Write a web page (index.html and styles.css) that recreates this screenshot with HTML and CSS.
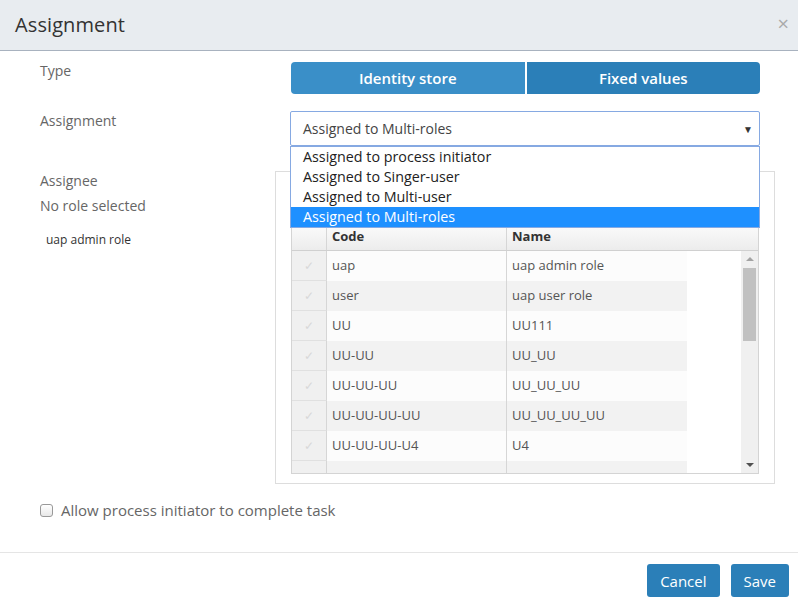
FILE: index.html
```html
<!DOCTYPE html>
<html>
<head>
<meta charset="utf-8">
<link rel="stylesheet" href="styles.css">
</head>
<body>
<div class="modal">
  <div class="modal-header">
    <h1 class="title">Assignment</h1>
    <span class="close">×</span>
  </div>
  <div class="modal-body">
    <div class="form-row row-type">
      <div class="label">Type</div>
      <div class="control">
        <div class="btn-group">
          <button class="seg seg-active">Identity store</button>
          <button class="seg">Fixed values</button>
        </div>
      </div>
    </div>
    <div class="form-row row-assign">
      <div class="label">Assignment</div>
      <div class="control select-wrap">
        <div class="select">
          <span>Assigned to Multi-roles</span>
          <span class="arrow">▼</span>
        </div>
        <ul class="options">
          <li>Assigned to process initiator</li>
          <li>Assigned to Singer-user</li>
          <li>Assigned to Multi-user</li>
          <li class="selected">Assigned to Multi-roles</li>
        </ul>
      </div>
    </div>
    <div class="form-row row-assignee">
      <div class="left">
        <div class="label">Assignee</div>
        <div class="label none">No role selected</div>
        <div class="chosen">uap admin role</div>
      </div>
      <div class="panel">
        <div class="grid">
          <div class="grid-head">
            <div class="c-chk"></div>
            <div class="c-code">Code</div>
            <div class="c-name">Name</div>
          </div>
          <div class="grid-body">
            <div class="rows">
              <div class="grow"><div class="c-chk">✓</div><div class="c-code">uap</div><div class="c-name">uap admin role</div></div>
              <div class="grow"><div class="c-chk">✓</div><div class="c-code">user</div><div class="c-name">uap user role</div></div>
              <div class="grow"><div class="c-chk">✓</div><div class="c-code">UU</div><div class="c-name">UU111</div></div>
              <div class="grow"><div class="c-chk">✓</div><div class="c-code">UU-UU</div><div class="c-name">UU_UU</div></div>
              <div class="grow"><div class="c-chk">✓</div><div class="c-code">UU-UU-UU</div><div class="c-name">UU_UU_UU</div></div>
              <div class="grow"><div class="c-chk">✓</div><div class="c-code">UU-UU-UU-UU</div><div class="c-name">UU_UU_UU_UU</div></div>
              <div class="grow"><div class="c-chk">✓</div><div class="c-code">UU-UU-UU-U4</div><div class="c-name">U4</div></div>
              <div class="grow"><div class="c-chk"></div><div class="c-code"></div><div class="c-name"></div></div>
            </div>
            <div class="scrollbar">
              <span class="sb-up"></span>
              <span class="sb-thumb"></span>
              <span class="sb-down"></span>
            </div>
          </div>
        </div>
      </div>
    </div>
    <label class="check-row">
      <span class="checkbox"></span>
      <span>Allow process initiator to complete task</span>
    </label>
  </div>
  <div class="modal-footer">
    <button class="btn">Cancel</button>
    <button class="btn">Save</button>
  </div>
</div>
</body>
</html>
```

FILE: styles.css
```css
* { box-sizing: border-box; }
html, body { margin: 0; padding: 0; background: #fff; }
body {
  font-family: "Open Sans", "Noto Sans", sans-serif;
  color: #666;
  width: 798px;
  height: 607px;
  overflow: hidden;
}
.modal { width: 798px; height: 607px; display: flex; flex-direction: column; }
.modal-header {
  height: 51px;
  background: #e8ecf0;
  border-bottom: 1px solid #a8b2bf;
  display: flex;
  align-items: center;
  justify-content: space-between;
  padding: 0 9px 2px 15px;
}
.title { margin: 0; font-size: 20px; font-weight: normal; color: #333; letter-spacing: 0.1px; }
.close { font-size: 20px; color: #aaa; line-height: 1; }
.modal-body { flex: 1; padding: 0 0 0 40px; position: relative; }
.form-row { display: flex; }
.label { width: 250px; font-size: 14px; line-height: 20px; color: #666; }
.row-type { margin-top: 10px; }
.control { width: 470px; }
.row-type .control { margin-top: 1px; }
.btn-group { display: flex; gap: 2px; padding-left: 1px; }
.seg {
  flex: 1;
  height: 32px;
  border: none;
  background: #2b7fb8;
  color: #fff;
  font-family: inherit;
  font-size: 15px;
  font-weight: 600;
  border-radius: 0 4px 4px 0;
}
.seg-active { background: #3a8fc8; border-radius: 4px 0 0 4px; }
.row-assign { margin-top: 17px; }
.row-assign .label { margin-top: 0; }
.select-wrap { position: relative; z-index: 5; }
.select {
  height: 35px;
  border: 1px solid #86a9e2;
  border-radius: 2px;
  display: flex;
  align-items: center;
  justify-content: space-between;
  padding: 0 6px 0 12px;
  font-size: 14px;
  color: #444;
}
.arrow { font-size: 10px; color: #333; }
.options {
  position: absolute;
  top: 35px;
  left: 0;
  width: 470px;
  margin: 0;
  padding: 0;
  list-style: none;
  background: #fff;
  border: 1px solid #86a9e2;
}
.options li { height: 20px; line-height: 20px; padding-left: 12px; font-size: 14.3px; color: #222; }
.options li.selected { background: #1e90ff; color: #fff; }
.row-assignee { margin-top: 25px; }
.left { width: 235px; }
.none { margin-top: 5px; }
.chosen { font-size: 12px; color: #333; margin: 15px 0 0 6px; }
.panel {
  width: 500px;
  height: 313px;
  border: 1px solid #ddd;
  padding: 54px 15px 0 15px;
}
.grid { border: 1px solid #d4d4d4; height: 248px; display: flex; flex-direction: column; }
.grid-head {
  height: 24px;
  flex: none;
  display: flex;
  background: linear-gradient(#fafafa, #ececec);
  border-bottom: 1px solid #d0d0d0;
  font-size: 13px;
  font-weight: bold;
  color: #333;
  line-height: 19px;
}
.c-chk { width: 35px; flex: none; border-right: 1px solid #d6d6d6; }
.c-code { width: 180px; flex: none; border-right: 1px solid #d6d6d6; padding-left: 5px; }
.c-name { width: 180px; flex: none; padding-left: 5px; }
.grid-body { flex: 1; display: flex; overflow: hidden; }
.rows { flex: 1; overflow: hidden; }
.grow { height: 30px; display: flex; font-size: 13px; line-height: 29px; color: #555; }
.grow:nth-child(odd) .c-code, .grow:nth-child(odd) .c-name { background: #fcfcfc; }
.grow:nth-child(even) .c-code, .grow:nth-child(even) .c-name { background: #f2f2f2; }
.grow .c-chk { background: #f0f0f0; border-bottom: 1px solid #e0e0e0; color: #d8d8d8; font-size: 12px; text-align: center; }
.scrollbar { width: 17px; background: #f0f0f0; display: flex; flex-direction: column; align-items: center; }
.sb-up { margin-top: 6px; width: 0; height: 0; border-left: 4px solid transparent; border-right: 4px solid transparent; border-bottom: 4px solid #a3a3a3; }
.sb-thumb { margin-top: 7px; width: 13px; height: 73px; background: #c1c1c1; }
.sb-down { margin-top: auto; margin-bottom: 6px; width: 0; height: 0; border-left: 4px solid transparent; border-right: 4px solid transparent; border-top: 4px solid #505050; }
.check-row { display: flex; align-items: center; gap: 8px; margin-top: 16px; font-size: 15px; color: #666; }
.checkbox { width: 13px; height: 13px; border: 1px solid #999; border-radius: 3px; background: linear-gradient(#fff, #e8e8e8); }
.modal-footer {
  height: 55px;
  border-top: 1px solid #e5e5e5;
  display: flex;
  justify-content: flex-end;
  align-items: flex-start;
  gap: 11px;
  padding: 11px 9px 0 0;
}
.btn {
  height: 33px;
  border: none;
  border-radius: 3px;
  background: #2b7fb8;
  color: #fff;
  font-family: inherit;
  font-size: 15px;
  padding: 0 13px;
}
```
